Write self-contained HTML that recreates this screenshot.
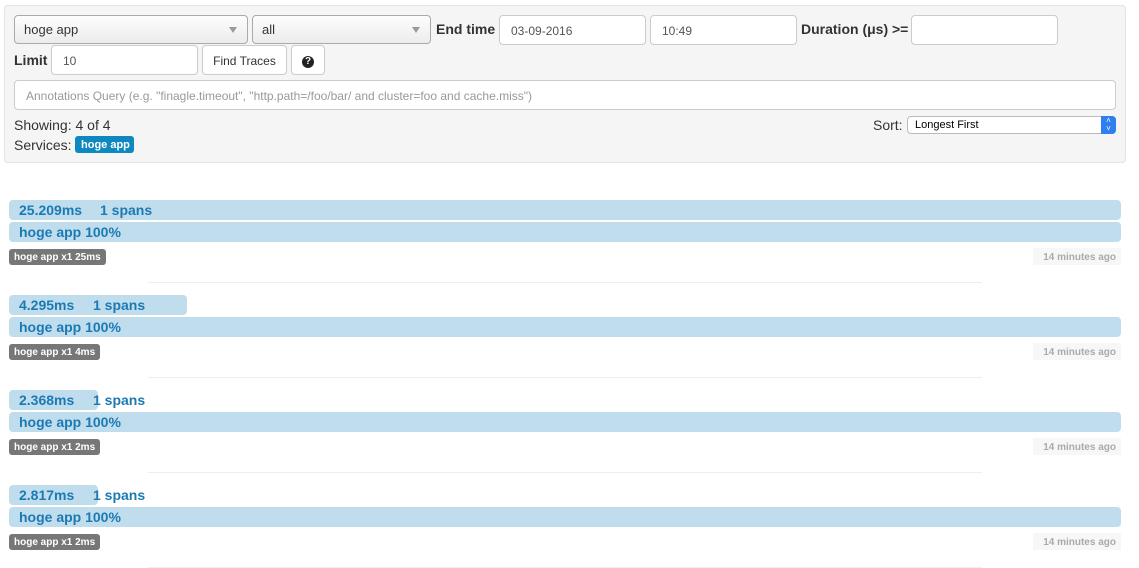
<!DOCTYPE html>
<html><head><meta charset="utf-8"><style>
*{box-sizing:border-box;margin:0;padding:0}
body{width:1139px;height:568px;background:#fff;font-family:"Liberation Sans",Arial,sans-serif;font-size:14px;color:#333;position:relative;overflow:hidden}
.a{position:absolute}
.well{left:4px;top:5px;width:1122px;height:158px;background:#f5f5f5;border:1px solid #e3e3e3;border-radius:4px}
.sel{background:linear-gradient(#fdfdfd,#ececec);border:1px solid #aaa;border-radius:4px;height:29px;font-size:13px;padding:6px 9px;color:#333}
.sel:after{content:"";position:absolute;right:10px;top:11px;border-left:4px solid transparent;border-right:4px solid transparent;border-top:6px solid #999}
.in{background:#fff;border:1px solid #ccc;border-radius:4px;height:30px;font-size:12px;padding:8px 11px;color:#555}
.lbl{font-weight:bold;font-size:14px;color:#333}
.btn{background:#fff;border:1px solid #ccc;border-radius:4px;height:30px;font-size:12px;text-align:center;padding-top:8px;color:#333}
.bar{background:#c0ddee;border-radius:4px;height:20px;color:#1c7ab3;font-weight:bold;font-size:14px;padding:2px 0 0 10px}
.bt{color:#1c7ab3;font-weight:bold;font-size:14px}
.lab{background:#777;color:#fff;font-weight:bold;font-size:10px;border-radius:3px;height:16px;padding:3px 5px 0}
.ago{background:#f7f7f7;color:#aaa;font-weight:bold;font-size:10px;height:17px;padding:4px 5px 0;width:88px;text-align:right}
.hr{height:1px;background:#eee;left:148px;width:834px}
</style></head><body>
<div class="a well"></div>
<div class="a sel" style="left:14px;top:15px;width:234px">hoge app</div>
<div class="a sel" style="left:252px;top:15px;width:179px">all</div>
<div class="a lbl" style="left:436px;top:21px">End time</div>
<div class="a in" style="left:499px;top:15px;width:147px">03-09-2016</div>
<div class="a in" style="left:650px;top:15px;width:147px">10:49</div>
<div class="a lbl" style="left:801px;top:21px">Duration (μs) &gt;=</div>
<div class="a in" style="left:911px;top:15px;width:147px"></div>
<div class="a lbl" style="left:14px;top:52px">Limit</div>
<div class="a in" style="left:51px;top:45px;width:147px">10</div>
<div class="a btn" style="left:202px;top:45px;width:85px">Find Traces</div>
<div class="a btn" style="left:291px;top:45px;width:34px;padding-top:7px"><span style="display:inline-block;width:12px;height:12px;border-radius:50%;background:#222;color:#fff;font-size:10px;font-weight:bold;line-height:12px">?</span></div>
<div class="a in" style="left:14px;top:80px;width:1102px;height:30px;color:#999">Annotations Query (e.g. "finagle.timeout", "http.path=/foo/bar/ and cluster=foo and cache.miss")</div>
<div class="a" style="left:14px;top:117px">Showing: 4 of 4</div>
<div class="a" style="left:14px;top:137px">Services:</div>
<div class="a" style="left:75px;top:136px;width:59px;height:17px;background:#0f88c0;color:#fff;font-weight:bold;font-size:11px;border-radius:3px;padding:3px 0 0 6px">hoge app</div>
<div class="a" style="left:873px;top:117px">Sort:</div>
<div class="a" style="left:907px;top:116px;width:209px;height:18px;background:#fff;border:1px solid #bbb;border-radius:4px;font-size:11px;padding:2px 7px;color:#000">Longest First<div class="a" style="right:-1px;top:-1px;width:15px;height:18px;background:#2f7ff0;border-radius:0 4px 4px 0;color:#fff;font-size:8px;text-align:center;line-height:8px;padding-top:1px">˄<br>˅</div></div>

<div class="a bar" style="left:9px;top:200px;width:1112px">25.209ms</div><div class="a bt" style="left:100px;top:202px">1 spans</div>
<div class="a bar" style="left:9px;top:222px;width:1112px">hoge app 100%</div>
<div class="a lab" style="left:9px;top:249px">hoge app x1 25ms</div>
<div class="a ago" style="left:1033px;top:248px">14 minutes ago</div>
<div class="a hr" style="top:282px"></div>

<div class="a bar" style="left:9px;top:295px;width:178px">4.295ms</div><div class="a bt" style="left:93px;top:297px">1 spans</div>
<div class="a bar" style="left:9px;top:317px;width:1112px">hoge app 100%</div>
<div class="a lab" style="left:9px;top:344px">hoge app x1 4ms</div>
<div class="a ago" style="left:1033px;top:343px">14 minutes ago</div>
<div class="a hr" style="top:377px"></div>

<div class="a bar" style="left:9px;top:390px;width:89px">2.368ms</div><div class="a bt" style="left:93px;top:392px">1 spans</div>
<div class="a bar" style="left:9px;top:412px;width:1112px">hoge app 100%</div>
<div class="a lab" style="left:9px;top:439px">hoge app x1 2ms</div>
<div class="a ago" style="left:1033px;top:438px">14 minutes ago</div>
<div class="a hr" style="top:472px"></div>

<div class="a bar" style="left:9px;top:485px;width:89px">2.817ms</div><div class="a bt" style="left:93px;top:487px">1 spans</div>
<div class="a bar" style="left:9px;top:507px;width:1112px">hoge app 100%</div>
<div class="a lab" style="left:9px;top:534px">hoge app x1 2ms</div>
<div class="a ago" style="left:1033px;top:533px">14 minutes ago</div>
<div class="a hr" style="top:567px"></div>
</body></html>
